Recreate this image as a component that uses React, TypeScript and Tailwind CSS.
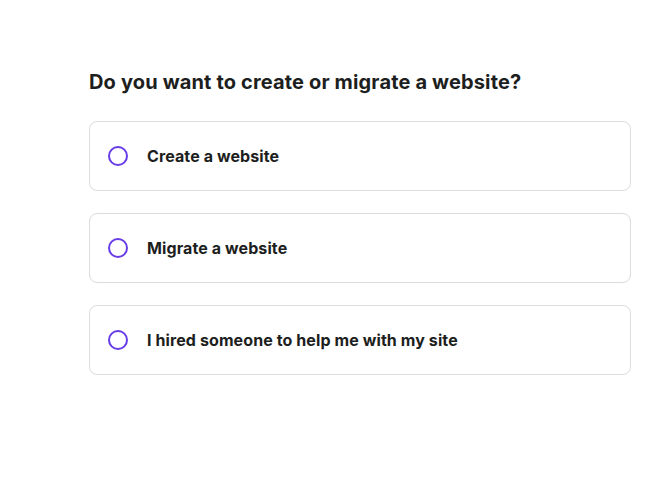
import React from "react";

const options = [
  "Create a website",
  "Migrate a website",
  "I hired someone to help me with my site",
];

export default function App() {
  return (
    <div
      className="min-h-[495px] w-full bg-white"
      style={{ fontFamily: "Inter, 'Open Sans', 'Liberation Sans', sans-serif" }}
    >
      <div className="ml-[89px] w-[542px] pt-[68px]">
        <h1 className="text-[20px] font-bold leading-[28px] tracking-[0.15px] text-[#1d1e20]">
          Do you want to create or migrate a website?
        </h1>
        <div className="mt-[25px] flex flex-col gap-[22px]">
          {options.map((o) => (
            <label
              key={o}
              className="flex h-[70px] items-center rounded-[8px] border border-[#dadce0] bg-white pl-[18px]"
            >
              <span className="h-[20px] w-[20px] shrink-0 rounded-full border-2 border-[#673de6]" />
              <span className="ml-[19px] text-[16px] font-bold tracking-[0.1px] text-[#1d1e20]">{o}</span>
            </label>
          ))}
        </div>
      </div>
    </div>
  );
}
